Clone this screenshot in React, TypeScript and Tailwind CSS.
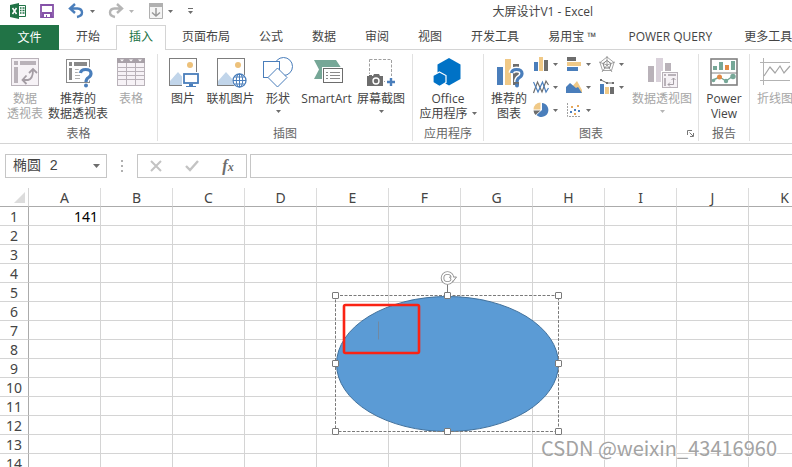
import React from "react";

const BLUE = "#4a7ebb";
const SAND = "#f0c987";
const GREY = "#6d6d6d";
const TEAL = "#76a797";
const MUTED = "#b9b2b9";

function Caret({ className = "text-[#6d6d6d]" }: { className?: string }) {
  return (
    <svg className={`h-[3px] w-[5px] shrink-0 ${className}`} viewBox="0 0 5 3" aria-hidden>
      <path d="M0 0H5L2.5 3Z" fill="currentColor" />
    </svg>
  );
}

function Icon({ children }: { children: React.ReactNode }) {
  return (
    <svg className="h-8 w-8 shrink-0" viewBox="0 0 32 32" fill="none" aria-hidden>
      {children}
    </svg>
  );
}

function HelpBadge() {
  return (
    <>
      <path d="M18.500 17Q19 13.500 23.500 13.500Q29 13.500 29 17.500Q29 20 26.500 21.500Q24 23 24 26" stroke="#fff" strokeWidth="6" />
      <path d="M18.500 17Q19 13.500 23.500 13.500Q29 13.500 29 17.500Q29 20 26.500 21.500Q24 23 24 26" stroke={BLUE} strokeWidth="3.200" />
      <circle cx="24" cy="29.500" r="2" fill={BLUE} />
    </>
  );
}

function PivotIcon() {
  return (
    <Icon>
      <rect x="2.5" y="2.5" width="27" height="27" fill="#f6f2f6" stroke={MUTED} />
      <path d="M5 5H9V9H5ZM11 5H27V9H11ZM5 11H9V27H5Z" fill={MUTED} />
      <path d="M14 24H19Q24 23 24 14" stroke="#a49da4" strokeWidth="1.8" />
      <path d="M17.500 19.500L13.500 24L17.500 28M20 17L24 13L28 17" stroke="#a49da4" strokeWidth="1.8" />
    </Icon>
  );
}

function RecommendedPivotIcon() {
  return (
    <Icon>
      <rect x="4.500" y="3.500" width="23" height="23" fill="#fff" stroke="#8a8a8a" />
      <path d="M7 6H10V10H7ZM12 6H25V10H12ZM7 12H10V24H7Z" fill="#8a8a8a" />
      <path d="M13 13.500H21M13 16.500H19M13 19.500H18M13 22.500H18" stroke="#b0b0b0" />
      <HelpBadge />
    </Icon>
  );
}

function TableIcon() {
  return (
    <Icon>
      <rect x="2.500" y="2.500" width="27" height="27" fill="#f6f2f6" stroke={MUTED} />
      <path d="M2 2H30V7H2Z" fill="#a8a1a8" />
      <path d="M2 11.500H30M2 15.500H30M2 19.500H30M2 23.500H30M11.500 7V30M20.500 7V30" stroke={MUTED} />
      <path d="M5 3.500H9L7 5.500ZM14 3.500H18L16 5.500ZM23 3.500H27L25 5.500Z" fill="#fff" />
    </Icon>
  );
}

function Photo() {
  return (
    <>
      <rect x="2.500" y="2.500" width="27" height="27" fill="#fff" stroke="#7d7d7d" />
      <circle cx="23" cy="9" r="3" fill="#edc17a" />
      <path d="M3 25L11 16L19 25V29H3Z" fill="#c1d5ea" />
    </>
  );
}

function PictureIcon() {
  return (
    <Icon>
      <Photo />
      <path d="M15 16H32V32H15Z" fill="#fff" />
      <rect x="17" y="18" width="14" height="9" fill="#fff" stroke={BLUE} strokeWidth="1.800" />
      <path d="M22 28H26V30H29V31H19V30H22Z" fill={BLUE} />
    </Icon>
  );
}

function OnlinePictureIcon() {
  return (
    <Icon>
      <Photo />
      <circle cx="24.500" cy="24.500" r="7.500" fill="#fff" />
      <circle cx="24.500" cy="24.500" r="6.500" stroke={BLUE} strokeWidth="1.300" />
      <ellipse cx="24.500" cy="24.500" rx="3.200" ry="6.500" stroke={BLUE} />
      <path d="M18 24.500H31M24.500 18V31M19.500 21H29.500M19.500 28H29.500" stroke={BLUE} />
    </Icon>
  );
}

function ShapesIcon() {
  return (
    <Icon>
      <circle cx="21.500" cy="10.500" r="9" stroke={BLUE} />
      <rect x="1.500" y="5.500" width="16" height="16" fill="#fff" stroke={BLUE} />
      <path d="M15.500 12L25 21.500L15.500 31L6 21.500Z" fill="#fff" stroke={BLUE} />
    </Icon>
  );
}

function SmartArtIcon() {
  return (
    <Icon>
      <path d="M3 4H25L31 13L25 23H3L8 13.500Z" fill={TEAL} />
      <path d="M11 11H32V28H11Z" fill="#fff" />
      <rect x="12.500" y="12.500" width="19" height="14" fill="#fff" stroke={GREY} />
      <path d="M15 16.500H17M19 16.500H29M15 19.500H17M19 19.500H29M15 22.500H17M19 22.500H29" stroke="#8a8a8a" />
    </Icon>
  );
}

function ScreenshotIcon() {
  return (
    <Icon>
      <rect x="4.500" y="3.500" width="22" height="22" stroke="#a0a0a0" strokeDasharray="3 1.500" />
      <path d="M1 18H19V31H1ZM20 20H32V32H20Z" fill="#fff" />
      <path d="M2 20H4V19H7V20H8L9 18H14L15 20H18V30H2Z" fill={GREY} />
      <circle cx="11" cy="25" r="3" stroke="#fff" strokeWidth="1.400" />
      <path d="M26 22V30M22 26H30" stroke={BLUE} strokeWidth="2.400" />
    </Icon>
  );
}

function OfficeIcon() {
  return (
    <Icon>
      <path d="M17 2L28.500 8.500V23L17 29.500L5.500 23V8.500Z" fill="#0072c6" />
      <path d="M7.500 16L14 19.500V26.500L7.500 30.500L1 26.500V19.500Z" fill="#0072c6" stroke="#fff" strokeWidth="1.200" />
    </Icon>
  );
}

function RecommendedChartIcon() {
  return (
    <Icon>
      <path d="M4 11H10V29H4Z" fill={BLUE} />
      <path d="M12 3H18V29H12Z" fill={SAND} />
      <path d="M20 8H26V29H20Z" fill={GREY} />
      <HelpBadge />
    </Icon>
  );
}

function PivotChartIcon() {
  return (
    <Icon>
      <path d="M2 10H8V26H2Z" fill={MUTED} />
      <path d="M10 2H17V26H10Z" fill="#d9d1da" />
      <path d="M19 7H25V26H19Z" fill={MUTED} />
      <rect x="15" y="15" width="17" height="17" fill="#fff" />
      <rect x="16.500" y="16.500" width="15" height="15" fill="#f6f2f6" stroke={MUTED} />
      <path d="M18 18H20V20H18ZM22 18H30V20H22ZM18 22H20V30H18Z" fill={MUTED} />
      <path d="M22 28.500H27.500V22M24 26.500L22 28.500L24 30.500M25.500 24L27.500 22L29.500 24" stroke="#a49da4" />
    </Icon>
  );
}

function PowerViewIcon() {
  return (
    <Icon>
      <rect x="3" y="3" width="26" height="26" fill="#fff" stroke="#808080" strokeWidth="1.600" />
      <path d="M3 17H29" stroke="#808080" />
      <path d="M5 10H9V14H5ZM11 6H15V14H11ZM23 5H27V14H23Z" fill={TEAL} />
      <path d="M17 9H21V14H17Z" fill="#e38a45" />
      <path d="M5 24L11.500 21L18 25L25 20" stroke={TEAL} strokeWidth="1.400" />
      <circle cx="5.500" cy="24.500" r="1.800" fill={TEAL} />
      <circle cx="11.500" cy="21" r="2.500" fill="#e38a45" />
      <circle cx="18" cy="25" r="2.200" fill={TEAL} />
      <circle cx="25" cy="20.500" r="2.700" fill={TEAL} />
    </Icon>
  );
}

function SparklineIcon() {
  return (
    <Icon>
      <path d="M1 6.500H31M1 24.500H31M4.500 2V29" stroke="#b3b3b3" />
      <path d="M5 20L11 11L16 17L21 10L25 17L31 10" stroke="#a5a5a5" strokeWidth="1.200" />
    </Icon>
  );
}

const chartMenus = [
  {
    name: "柱形图",
    art: (
      <>
        <path d="M1 6H5V15H1Z" fill={BLUE} />
        <path d="M6 1H10V15H6Z" fill={SAND} />
        <path d="M11 4H15V15H11Z" fill={GREY} />
      </>
    ),
  },
  {
    name: "条形图",
    art: (
      <>
        <path d="M1 1H10V5H1Z" fill={GREY} />
        <path d="M1 6H15V10H1Z" fill={SAND} />
        <path d="M1 11H12V15H1Z" fill={BLUE} />
      </>
    ),
  },
  {
    name: "雷达图",
    art: (
      <>
        <path d="M8 1L15 6.500L12.500 14.500H3.500L1 6.500Z" stroke="#9a9a9a" strokeWidth="0.900" />
        <path d="M8 4.500L12 7.500L10.500 12H5.500L4 7.500Z" stroke={GREY} strokeWidth="0.900" />
        <path d="M8 9V0M8 9L16 6M8 9L13 16M8 9L3 16M8 9L0 6" stroke="#8a8a8a" strokeWidth="0.800" />
      </>
    ),
  },
  {
    name: "折线图",
    art: (
      <>
        <path d="M0.500 14L4.500 3L9 13L13 2L15.500 6" stroke={GREY} strokeWidth="1.200" />
        <path d="M0.500 3L5 13L9.500 3L13 13L15.500 9" stroke={BLUE} strokeWidth="1.200" />
      </>
    ),
  },
  {
    name: "面积图",
    art: (
      <>
        <path d="M4 10L11 2L16 11V14H4Z" fill={SAND} />
        <path d="M0 14V8L4 4L10 9L12 8L16 14Z" fill={BLUE} />
      </>
    ),
  },
  {
    name: "组合图",
    art: (
      <>
        <path d="M1 5H5V15H1Z" fill={BLUE} />
        <path d="M6 8H10V15H6Z" fill={SAND} />
        <path d="M11 8H15V15H11Z" fill={GREY} />
        <path d="M2 1L8 4L14 4" stroke={GREY} />
        <path d="M1 0H3V2H1ZM7 3H9V5H7ZM13 3H15V5H13Z" fill={GREY} />
      </>
    ),
  },
  {
    name: "饼图",
    art: (
      <>
        <path d="M9 8V1A7 7 0 1 1 3.500 13Z" fill={BLUE} />
        <path d="M7.500 7.500V0.500A7 7 0 0 0 0.500 7.500Z" fill={SAND} />
        <path d="M7.500 8.500H0.500A7 7 0 0 0 2.500 13Z" fill={GREY} />
      </>
    ),
  },
  {
    name: "散点图",
    art: (
      <>
        <path d="M1.500 1V14.500H15" stroke="#a0a0a0" strokeDasharray="2 1" />
        <path d="M4 9H6V11H4ZM8 7H10V9H8ZM12 8H14V10H12Z" fill={BLUE} />
        <path d="M5 4H7V6H5ZM11 3H13V5H11ZM8 11H10V13H8Z" fill="#e6a85c" />
      </>
    ),
  },
];

function RibbonButton({
  icon,
  lines,
  width,
  caret,
  disabled,
}: {
  icon: React.ReactNode;
  lines: string[];
  width: string;
  caret?: "below" | "inline";
  disabled?: boolean;
}) {
  return (
    <button
      type="button"
      disabled={disabled}
      className={`flex shrink-0 flex-col items-center whitespace-nowrap text-xs leading-[15px] ${width} ${
        disabled ? "text-[#a6a6a6]" : "text-[#444]"
      }`}
    >
      {icon}
      <span className="mt-[3px] flex flex-col items-center">
        {lines.map((line, i) => (
          <span key={line} className="flex items-center gap-1">
            {line}
            {caret === "inline" && i === lines.length - 1 && <Caret />}
          </span>
        ))}
      </span>
      {caret === "below" && (
        <span className="mt-1 flex">
          <Caret className={disabled ? "text-[#b5b5b5]" : "text-[#6d6d6d]"} />
        </span>
      )}
    </button>
  );
}

function RibbonGroup({
  label,
  className = "",
  launcher,
  children,
}: {
  label: string;
  className?: string;
  launcher?: boolean;
  children: React.ReactNode;
}) {
  return (
    <section
      aria-label={label}
      className="relative flex shrink-0 flex-col border-r border-[#e1e1e1] text-center"
    >
      <div className={`flex h-[72px] shrink-0 items-start ${className}`}>{children}</div>
      <div className="text-xs leading-[15px] text-[#666]">{label}</div>
      {launcher && (
        <button type="button" aria-label={`${label}选项`} className="absolute right-1 bottom-1">
          <svg className="h-[7px] w-[7px]" viewBox="0 0 7 7" fill="none" aria-hidden>
            <path d="M0.500 5V0.500H5M2.500 2.500L6 6M6.500 3V6.500H3" stroke="#777" />
          </svg>
        </button>
      )}
    </section>
  );
}

function TitleBar() {
  return (
    <header className="flex h-[25px] items-start pt-[3px] pr-[199px] pl-[10px]">
      <div className="flex h-4 items-center">
        <svg className="h-4 w-4" viewBox="0 0 16 16" fill="none" aria-hidden>
          <path d="M9 2.500H15.500V13.500H9" fill="#fff" stroke="#217346" />
          <path d="M10 5H11.500M10 7.500H11.500M10 10H11.500M12.500 5H14.500M12.500 7.500H14.500M12.500 10H14.500" stroke="#217346" strokeWidth="1.300" />
          <path d="M0 2L9 0V16L0 14Z" fill="#217346" />
          <path d="M2.500 5L6.500 11M6.500 5L2.500 11" stroke="#fff" strokeWidth="1.500" />
        </svg>
        <button type="button" aria-label="保存" className="ml-[14px]">
          <svg className="h-[14px] w-[14px]" viewBox="0 0 14 14" fill="none" aria-hidden>
            <path d="M1 1H13V13H1Z" fill="#fff" stroke="#8552a8" strokeWidth="1.800" />
            <path d="M2 8H12V13H2Z" fill="#8552a8" />
            <path d="M4 10H10V13H7V11H6V13H4Z" fill="#fff" />
          </svg>
        </button>
        <button type="button" aria-label="撤消" className="ml-[14px] flex items-center gap-[6px]">
          <svg className="h-4 w-4" viewBox="0 0 16 16" fill="none" aria-hidden>
            <path d="M7 1L2 5.500L7 10M2 5.500H9.500Q14 6 14 9.500Q14 13 9 14" stroke={BLUE} strokeWidth="2.400" />
          </svg>
          <Caret />
        </button>
        <button type="button" aria-label="恢复" disabled className="ml-[13px] flex items-center gap-[5px]">
          <svg className="h-4 w-4" viewBox="0 0 16 16" fill="none" aria-hidden>
            <path d="M9 1L14 5.500L9 10M14 5.500H6.500Q2 6 2 9.500Q2 13 7 14" stroke="#b5b5b5" strokeWidth="2.400" />
          </svg>
          <Caret className="text-[#b5b5b5]" />
        </button>
        <button type="button" aria-label="触摸模式" className="ml-[15px] flex items-center gap-[5px]">
          <svg className="h-4 w-[14px]" viewBox="0 0 14 16" fill="none" aria-hidden>
            <path d="M0.500 0.500H13.500V15.500H0.500Z" fill="#f4f4f4" stroke="#b0b0b0" />
            <path d="M0 0H14V4H0Z" fill="#b0b0b0" />
            <path d="M7 5V13M3 9.500L7 13L11 9.500" stroke="#999" strokeWidth="1.500" />
          </svg>
          <Caret />
        </button>
        <button type="button" aria-label="自定义快速访问工具栏" className="ml-[15px] flex flex-col items-center gap-[2px]">
          <span className="h-px w-[5px] bg-[#6d6d6d]" />
          <Caret />
        </button>
      </div>
      <h1 className="ml-auto text-xs leading-[18px] whitespace-nowrap">大屏设计V1 - Excel</h1>
    </header>
  );
}

const tabs = [
  "开始",
  "插入",
  "页面布局",
  "公式",
  "数据",
  "审阅",
  "视图",
  "开发工具",
  "易用宝 ™",
  "POWER QUERY",
  "更多工具",
];

function TabStrip() {
  return (
    <nav className="flex h-[25px] border-b border-[#d4d4d4] text-xs leading-[22px] whitespace-nowrap">
      <button type="button" className="mr-1 h-[25px] w-[59px] shrink-0 bg-[#217346] text-white">
        文件
      </button>
      <div className="flex gap-[3px]">
        {tabs.map((tab) => (
          <button
            key={tab}
            type="button"
            className={`h-[25px] shrink-0 border border-b-0 pb-[2px] ${
              tab === "POWER QUERY" ? "px-[15px]" : "px-3"
            } ${
              tab === "插入" ? "border-[#d4d4d4] bg-white text-[#217346]" : "border-transparent"
            }`}
          >
            {tab}
          </button>
        ))}
      </div>
    </nav>
  );
}

function Ribbon() {
  return (
    <div className="flex h-[94px] overflow-hidden border-b border-[#d4d4d4] pt-1 pb-[2px]">
      <RibbonGroup label="表格" className="gap-[2px] pt-[2px] pr-[6px] pl-[5px]">
        <RibbonButton icon={<PivotIcon />} lines={["数据", "透视表"]} width="w-10" disabled />
        <RibbonButton icon={<RecommendedPivotIcon />} lines={["推荐的", "数据透视表"]} width="w-[62px]" />
        <RibbonButton icon={<TableIcon />} lines={["表格"]} width="w-10" disabled />
      </RibbonGroup>
      <RibbonGroup label="插图" className="gap-px pt-[2px] pr-[5px] pl-[5px]">
        <RibbonButton icon={<PictureIcon />} lines={["图片"]} width="w-10" />
        <RibbonButton icon={<OnlinePictureIcon />} lines={["联机图片"]} width="w-[53px]" />
        <RibbonButton icon={<ShapesIcon />} lines={["形状"]} width="w-10" caret="below" />
        <RibbonButton icon={<SmartArtIcon />} lines={["SmartArt"]} width="w-[55px]" />
        <RibbonButton icon={<ScreenshotIcon />} lines={["屏幕截图"]} width="w-[52px]" caret="below" />
      </RibbonGroup>
      <RibbonGroup label="应用程序" className="px-1 pt-[2px]">
        <RibbonButton icon={<OfficeIcon />} lines={["Office", "应用程序"]} width="w-[62px]" caret="inline" />
      </RibbonGroup>
      <RibbonGroup label="图表" className="pt-[2px] pr-[6px] pl-1" launcher>
        <RibbonButton icon={<RecommendedChartIcon />} lines={["推荐的", "图表"]} width="w-[42px]" />
        <div className="ml-[3px] grid grid-cols-[33px_33px_33px] gap-y-[7px]">
          {chartMenus.map((chart) => (
            <button key={chart.name} type="button" aria-label={chart.name} className="flex items-center gap-1">
              <svg className="h-4 w-4" viewBox="0 0 16 16" fill="none" aria-hidden>
                {chart.art}
              </svg>
              <Caret />
            </button>
          ))}
        </div>
        <RibbonButton icon={<PivotChartIcon />} lines={["数据透视图"]} width="w-[60px]" caret="below" disabled />
      </RibbonGroup>
      <RibbonGroup label="报告" className="px-[5px] pt-[2px]">
        <RibbonButton icon={<PowerViewIcon />} lines={["Power", "View"]} width="w-10" />
      </RibbonGroup>
      <div className="flex pt-[2px] pl-1">
        <RibbonButton icon={<SparklineIcon />} lines={["折线图"]} width="w-[42px]" disabled />
      </div>
    </div>
  );
}

function FormulaBar() {
  return (
    <div className="flex h-11 items-center pl-[5px]">
      <div className="flex h-6 w-[102px] shrink-0 items-center border border-[#c6c6c6] pr-[6px] pl-[7px]">
        <input
          aria-label="名称框"
          defaultValue="椭圆 2"
          className="w-full min-w-0 font-['Liberation_Mono','Noto_Sans_CJK_SC',monospace] text-sm leading-5 outline-none"
        />
        <button type="button" aria-label="名称列表">
          <svg className="h-1 w-[7px]" viewBox="0 0 7 4" aria-hidden>
            <path d="M0 0H7L3.500 4Z" fill="#6d6d6d" />
          </svg>
        </button>
      </div>
      <div className="flex w-[30px] shrink-0 flex-col items-center gap-[3px]">
        <span className="h-[2px] w-[2px] bg-[#b0b0b0]" />
        <span className="h-[2px] w-[2px] bg-[#b0b0b0]" />
        <span className="h-[2px] w-[2px] bg-[#b0b0b0]" />
      </div>
      <div className="mr-[3px] grid h-6 w-[110px] shrink-0 grid-cols-3 items-center justify-items-center border border-[#c6c6c6]">
        <button type="button" aria-label="取消">
          <svg className="h-3 w-3" viewBox="0 0 12 12" fill="none" aria-hidden>
            <path d="M1 1L11 11M11 1L1 11" stroke="#c3c3c3" strokeWidth="2" />
          </svg>
        </button>
        <button type="button" aria-label="输入">
          <svg className="h-3 w-[14px]" viewBox="0 0 14 12" fill="none" aria-hidden>
            <path d="M1 6L5 10L13 1" stroke="#c3c3c3" strokeWidth="2.400" />
          </svg>
        </button>
        <button
          type="button"
          aria-label="插入函数"
          className="font-['Liberation_Serif',serif] text-base leading-5 font-bold text-[#6d6d6d] italic"
        >
          f<span className="text-xs">x</span>
        </button>
      </div>
      <input
        aria-label="编辑栏"
        className="h-6 min-w-0 flex-1 border border-r-0 border-[#c6c6c6] px-2 text-sm outline-none"
      />
    </div>
  );
}

const columns = "ABCDEFGHIJKLMNOP".split("");
const rows = Array.from({ length: 24 }, (_, i) => i + 1);
const cells: Record<string, string> = { A1: "141" };

const handles = [
  [0, 0],
  [112, 0],
  [223, 0],
  [0, 68],
  [223, 68],
  [0, 136],
  [112, 136],
  [223, 136],
];

function SelectedEllipse() {
  return (
    <svg
      className="absolute top-[79px] left-[331px] h-[170px] w-[232px]"
      viewBox="-4.500 -28.500 232 170"
      fill="none"
      aria-hidden
    >
      <ellipse cx="112" cy="68.500" rx="111" ry="67.500" fill="#5b9bd5" stroke="#41719c" />
      <rect x="0" y="0" width="223" height="136" stroke="#7a7a7a" strokeDasharray="3 1.500" />
      <path d="M112 -11V-3" stroke="#7a7a7a" />
      <circle cx="112" cy="-17.500" r="5" stroke="#8f8f8f" strokeWidth="3.600" />
      <path d="M114 -18.500H121L117.500 -14Z" fill="#fff" stroke="#8f8f8f" />
      <circle cx="112" cy="-17.500" r="5" stroke="#fff" strokeWidth="1.800" />
      {handles.map(([x, y]) => (
        <rect key={`${x}-${y}`} x={x - 3} y={y - 3} width="6" height="6" rx="0.500" fill="#fff" stroke="#7a7a7a" />
      ))}
      <path d="M43 26V44" stroke="#7089a3" />
      <rect x="8.500" y="9.500" width="75" height="48" rx="1.500" stroke="#fa2314" strokeWidth="2.600" />
    </svg>
  );
}

function Sheet() {
  return (
    <main className="relative min-h-0 flex-1 overflow-hidden">
      <table className="w-[1181px] table-fixed border-separate border-spacing-0 font-['Noto_Sans','Noto_Sans_CJK_SC',sans-serif] text-sm leading-4">
        <colgroup>
          <col className="w-[29px]" />
          {columns.map((col) => (
            <col key={col} className="w-[72px]" />
          ))}
        </colgroup>
        <thead>
          <tr className="h-[19px]">
            <th className="border-r border-b border-r-[#d4d4d4] border-b-[#ababab] p-0" aria-label="全选">
              <svg className="ml-[14px] h-[11px] w-[11px]" viewBox="0 0 11 11" aria-hidden>
                <path d="M11 0V11H0Z" fill="#dcdcdc" />
              </svg>
            </th>
            {columns.map((col) => (
              <th
                key={col}
                scope="col"
                className="border-r border-b border-r-[#dcdcdc] border-b-[#ababab] p-0 pt-[2px] font-normal text-[#444]"
              >
                {col}
              </th>
            ))}
          </tr>
        </thead>
        <tbody>
          {rows.map((row) => (
            <tr key={row} className="h-[19px]">
              <th
                scope="row"
                className="border-r border-b border-r-[#ababab] border-b-[#d4d4d4] p-0 pt-[2px] font-normal text-[#444]"
              >
                {row}
              </th>
              {columns.map((col) => (
                <td key={col} className="border-r border-b border-[#d4d4d4] p-0 pt-[2px] pr-[2px] text-right text-black">
                  {cells[`${col}${row}`]}
                </td>
              ))}
            </tr>
          ))}
        </tbody>
      </table>
      <SelectedEllipse />
      <div className="absolute right-[15px] bottom-[5px] font-['Noto_Sans_CJK_SC',sans-serif] text-xl leading-7 whitespace-nowrap text-[#a3a3a3] [text-shadow:1px_1px_0_#fff]">
        CSDN @weixin_43416960
      </div>
    </main>
  );
}

export default function App() {
  return (
    <div className="flex h-screen flex-col overflow-hidden bg-white font-['Open_Sans','Noto_Sans_CJK_SC',sans-serif] text-[#444]">
      <TitleBar />
      <TabStrip />
      <Ribbon />
      <FormulaBar />
      <Sheet />
    </div>
  );
}
